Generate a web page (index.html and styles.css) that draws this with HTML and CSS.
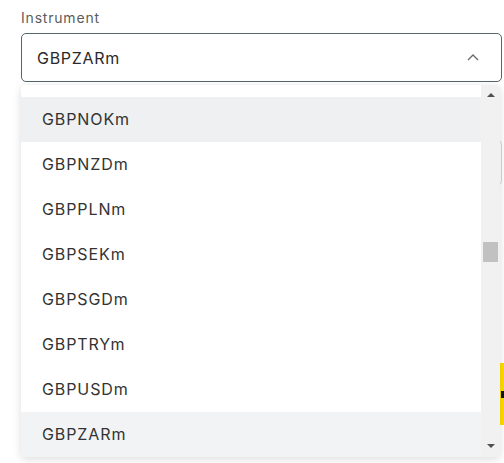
FILE: index.html
```html
<!DOCTYPE html>
<html lang="en">
<head>
    <meta charset="UTF-8">
    <meta name="viewport" content="width=device-width, initial-scale=1.0">
    <title>Instrument</title>
    <link rel="stylesheet" href="styles.css">
</head>
<body>

    <div class="form">
        <div class="field">
            <label class="field-label">Instrument</label>
            <div class="select-box">
                <span class="select-value">GBPZARm</span>
                <svg class="chevron" width="12" height="8" viewBox="0 0 12 8">
                    <path d="M1 7 L6 2 L11 7" fill="none" stroke="#6b6b6b" stroke-width="1.4"/>
                </svg>
            </div>

            <div class="listbox">
                <ul class="options">
                    <li class="option hover">GBPNOKm</li>
                    <li class="option">GBPNZDm</li>
                    <li class="option">GBPPLNm</li>
                    <li class="option">GBPSEKm</li>
                    <li class="option">GBPSGDm</li>
                    <li class="option">GBPTRYm</li>
                    <li class="option">GBPUSDm</li>
                    <li class="option selected">GBPZARm</li>
                </ul>
                <div class="scrollbar">
                    <span class="arrow up"></span>
                    <div class="track">
                        <div class="thumb"></div>
                    </div>
                    <span class="arrow down"></span>
                </div>
            </div>
        </div>

        <div class="hidden-input"></div>
        <button class="submit-btn"><span class="btn-icon"></span></button>
    </div>

</body>
</html>
```

FILE: styles.css
```css
html {
    overflow: hidden;
}

body {
    font-family: 'Inter', 'Roboto', sans-serif;
    margin: 0;
    padding: 0;
    min-height: 463px;
    background-color: #ffffff;
}

.form {
    padding: 8px 0 0 21px;
}

.field {
    position: relative;
    margin-right: 2px;
}

.field-label {
    display: block;
    font-size: 14px;
    line-height: 20px;
    letter-spacing: 0.8px;
    color: #5c5c5c;
    margin-bottom: 5px;
}

.select-box {
    height: 47px;
    border: 1px solid #55656a;
    border-radius: 5px;
    display: flex;
    align-items: center;
    justify-content: space-between;
    padding: 0 22px 0 15px;
}

.select-value {
    font-size: 16px;
    letter-spacing: 0.7px;
    color: #2a2a2a;
}

.chevron {
    margin-top: -1px;
}

/* dropdown menu laid over the form */
.listbox {
    position: absolute;
    top: calc(100% + 3px);
    left: 0;
    width: 479px;
    height: 372px;
    display: flex;
    background-color: #ffffff;
    border-radius: 4px;
    box-shadow: 0 2px 8px rgba(0, 0, 0, 0.14);
    overflow: hidden;
    z-index: 10;
}

.options {
    list-style: none;
    margin: 0;
    padding: 12px 0 0 0;
    flex: 1;
}

.option {
    height: 45px;
    line-height: 45px;
    padding-left: 21px;
    font-size: 16px;
    letter-spacing: 0.9px;
    color: #333333;
}

.option.hover {
    background-color: #eef0f2;
}

.option.selected {
    background-color: #f2f3f5;
}

.scrollbar {
    width: 19px;
    background-color: #f1f1f1;
    display: flex;
    flex-direction: column;
    align-items: center;
    padding: 8px 0 9px;
}

.arrow {
    width: 0;
    height: 0;
    border-left: 4px solid transparent;
    border-right: 4px solid transparent;
}

.arrow.up {
    border-bottom: 4px solid #505050;
}

.arrow.down {
    border-top: 4px solid #505050;
}

.track {
    flex: 1;
    width: 100%;
    padding: 0 2px;
    box-sizing: border-box;
}

.thumb {
    margin-top: 145px;
    height: 20px;
    background-color: #c1c1c1;
}

.hidden-input {
    margin: 58px 2px 0 0;
    height: 43px;
    border: 1px solid #d9d9d9;
    border-radius: 4px;
}

.submit-btn {
    display: flex;
    justify-content: flex-end;
    align-items: center;
    margin-top: 178px;
    width: 100%;
    height: 62px;
    padding: 0;
    border: none;
    background-color: #ffde02;
}

.btn-icon {
    width: 3px;
    height: 7px;
    background-color: #141414;
}
```
